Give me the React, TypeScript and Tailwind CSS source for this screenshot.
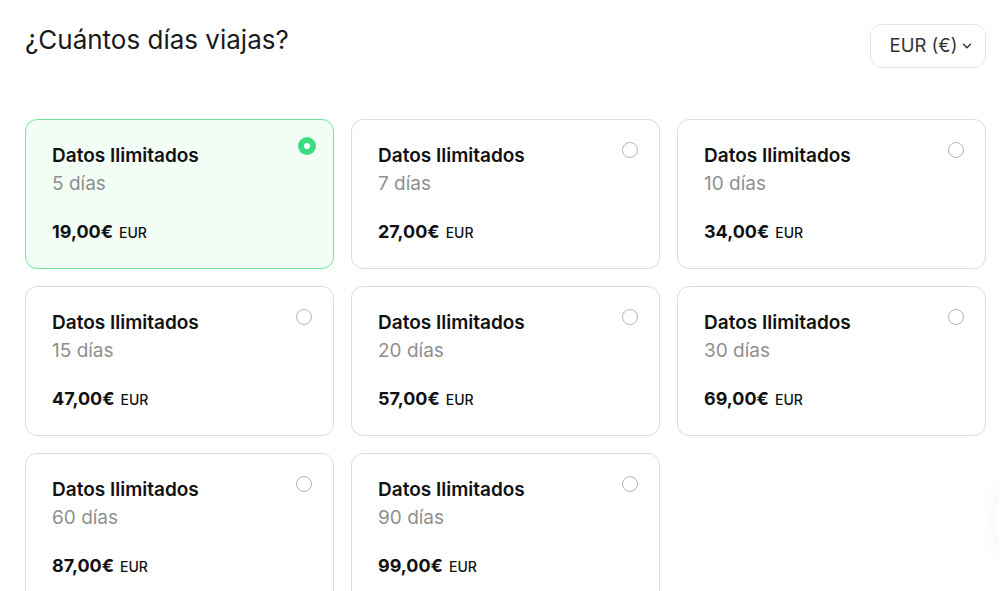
import { useState } from "react";
import { ChevronDown } from "lucide-react";

type Plan = { days: number; price: string };

const plans: Plan[] = [
  { days: 5, price: "19,00€" },
  { days: 7, price: "27,00€" },
  { days: 10, price: "34,00€" },
  { days: 15, price: "47,00€" },
  { days: 20, price: "57,00€" },
  { days: 30, price: "69,00€" },
  { days: 60, price: "87,00€" },
  { days: 90, price: "99,00€" },
];

function Radio({ checked }: { checked: boolean }) {
  if (checked) {
    return (
      <span className="flex h-[18px] w-[18px] items-center justify-center rounded-full bg-[#3ddc84]">
        <span className="h-[6px] w-[6px] rounded-full bg-white" />
      </span>
    );
  }
  return <span className="mt-[5px] mr-[4px] block h-4 w-4 rounded-full border border-[#b5b5b5] bg-white" />;
}

function PlanCard({ plan, selected, onSelect }: { plan: Plan; selected: boolean; onSelect: () => void }) {
  return (
    <button
      onClick={onSelect}
      className={`relative flex h-[150px] flex-col rounded-xl border pl-[26px] pt-6 text-left ${
        selected ? "border-[#6ee79a] bg-[#f2fdf6]" : "border-[#dcdcdc] bg-white"
      }`}
    >
      <span className="absolute right-[17px] top-[17px]">
        <Radio checked={selected} />
      </span>
      <span className="text-[19px] font-semibold leading-6 text-[#111]">Datos Ilimitados</span>
      <span className="mt-1 text-[19px] leading-6 text-[#8f8f8f]">{plan.days} días</span>
      <span className="mt-6 flex items-baseline gap-[6px] leading-6">
        <span className="text-[18px] font-bold text-[#111]">{plan.price}</span>
        <span className="text-[14px] font-medium text-[#111]">EUR</span>
      </span>
    </button>
  );
}

export default function App() {
  const [selected, setSelected] = useState(5);

  return (
    <div className="relative h-[591px] overflow-hidden bg-white font-['Inter',sans-serif] text-[#111]">
      <div className="pl-[25px] pr-[14px] pt-[24px]">
        <div className="flex items-start justify-between">
          <h2 className="text-[26px] font-normal leading-8 text-[#1a1a1a]">¿Cuántos días viajas?</h2>
          <button className="flex h-[44px] w-[116px] items-center justify-center gap-[3px] rounded-xl border border-[#e6e6e6] bg-white pl-2 text-[18.5px] text-[#333]">
            EUR (€)
            <ChevronDown className="h-[14px] w-[14px]" strokeWidth={2.5} />
          </button>
        </div>

        <div className="mt-[51px] grid grid-cols-3 gap-[17px]">
          {plans.map((p) => (
            <PlanCard key={p.days} plan={p} selected={selected === p.days} onSelect={() => setSelected(p.days)} />
          ))}
        </div>
      </div>

      {/* floating widget peeking from the right edge */}
      <div className="absolute right-[-60px] top-[480px] h-[80px] w-[64px] rounded-full bg-white shadow-[0_0_24px_rgba(0,0,0,0.06)]" />
    </div>
  );
}
